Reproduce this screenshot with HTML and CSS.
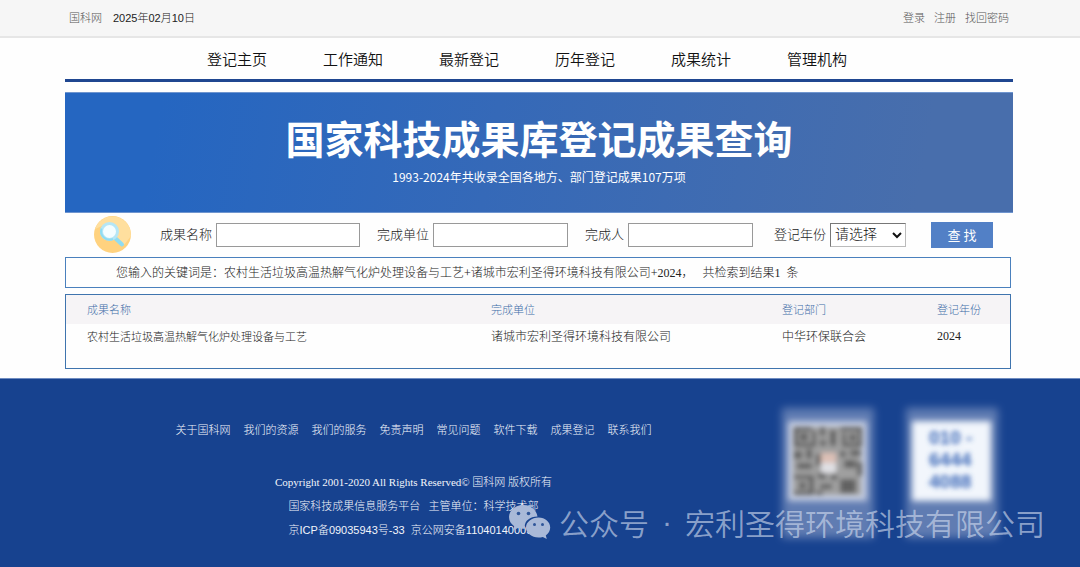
FILE: index.html
```html
<!DOCTYPE html>
<html lang="zh-CN">
<head>
  <meta charset="UTF-8">
  <meta name="viewport" content="width=device-width, initial-scale=1.0">
  <title>国家科技成果库登记成果查询</title>
  <link rel="stylesheet" href="styles.css">
</head>
<body>
  <header class="topbar">
    <div class="topbar-left">
      <a href="#">国科网</a>
      <span class="date">2025年02月10日</span>
    </div>
    <div class="topbar-right">
      <a href="#">登录</a>
      <a href="#">注册</a>
      <a href="#">找回密码</a>
    </div>
  </header>

  <main class="wrap">
    <nav class="nav">
      <a href="#">登记主页</a>
      <a href="#">工作通知</a>
      <a href="#">最新登记</a>
      <a href="#">历年登记</a>
      <a href="#">成果统计</a>
      <a href="#">管理机构</a>
    </nav>

    <div class="banner">
      <h1>国家科技成果库登记成果查询</h1>
      <p>1993-2024年共收录全国各地方、部门登记成果107万项</p>
    </div>

    <form class="search">
      <svg class="search-icon" viewBox="0 0 37 37">
        <circle cx="18.5" cy="18.5" r="18.5" fill="#ffd27f"/>
        <path d="M1 13A18.500 18.500 0 0 1 36 13L37 20L30 29L8 10Z" fill="#ffdf9e"/>
        <path d="M20.500 21.500L28 28.500" stroke="#8fdcf2" stroke-width="4" stroke-linecap="round"/>
        <circle cx="15.500" cy="15.500" r="8" fill="#f4fdff" stroke="#b5e6f6" stroke-width="3"/>
        <path d="M7.500 12.500A8.500 8.500 0 0 0 19 23" fill="none" stroke="#8fdcf2" stroke-width="2"/>
      </svg>
      <div class="field field-name">
        <label for="name">成果名称</label>
        <input type="text" id="name">
      </div>
      <div class="field field-unit">
        <label for="unit">完成单位</label>
        <input type="text" id="unit">
      </div>
      <div class="field field-person">
        <label for="person">完成人</label>
        <input type="text" id="person">
      </div>
      <div class="field field-year">
        <label for="year">登记年份</label>
        <select id="year">
          <option>请选择</option>
        </select>
      </div>
      <button type="button">查 找</button>
    </form>

    <div class="keyword">您输入的关键词是：农村生活垃圾高温热解气化炉处理设备与工艺+诸城市宏利圣得环境科技有限公司+2024，&nbsp; &nbsp;共检索到结果1 &nbsp;条</div>

    <div class="result">
      <table>
        <thead>
          <tr>
            <th class="col-name">成果名称</th>
            <th class="col-unit">完成单位</th>
            <th class="col-dept">登记部门</th>
            <th>登记年份</th>
          </tr>
        </thead>
        <tbody>
          <tr>
            <td class="small">农村生活垃圾高温热解气化炉处理设备与工艺</td>
            <td>诸城市宏利圣得环境科技有限公司</td>
            <td>中华环保联合会</td>
            <td>2024</td>
          </tr>
        </tbody>
      </table>
    </div>
  </main>

  <footer class="footer">
    <div class="footer-info">
      <div class="footer-links">
        <a href="#">关于国科网</a>
        <a href="#">我们的资源</a>
        <a href="#">我们的服务</a>
        <a href="#">免责声明</a>
        <a href="#">常见问题</a>
        <a href="#">软件下载</a>
        <a href="#">成果登记</a>
        <a href="#">联系我们</a>
      </div>
      <p>Copyright 2001-2020 All Rights Reserved© 国科网 版权所有</p>
      <p>国家科技成果信息服务平台 &nbsp; 主管单位：科学技术部</p>
      <p class="icp">京ICP备09035943号-33 &nbsp;京公网安备110401400097</p>
    </div>

    <svg class="codes" viewBox="0 0 240 156">
      <defs>
        <filter id="glow" x="-20%" y="-20%" width="140%" height="140%"><feGaussianBlur stdDeviation="4"/></filter>
        <filter id="edge" x="-20%" y="-20%" width="140%" height="140%"><feGaussianBlur stdDeviation="3"/></filter>
        <filter id="soft" x="-20%" y="-20%" width="140%" height="140%"><feGaussianBlur stdDeviation="2.700"/></filter>
      </defs>
      <g filter="url(#glow)" fill="#b9c3de" opacity="0.450">
        <rect x="12" y="12" width="92" height="130"/>
        <rect x="136" y="12" width="92" height="130"/>
      </g>
      <g filter="url(#edge)">
        <rect x="18" y="25" width="79" height="80" fill="#c3cbdf"/>
        <rect x="142" y="25" width="79" height="80" fill="#f2f6fc"/>
      </g>
      <g filter="url(#soft)">
        <rect x="23" y="31" width="68" height="68" fill="#a0a0a0"/>
        <g fill="#626262">
          <path d="M24 31h18v4h-14v12h14v-12h4v16h-22zM30 37h8v8h-8zM70 31h22v20h-20v-14h4v10h12v-12h-18zM79 38h7v7h-7zM24 79h20v20h-20v-4h15v-12h-15zM29 86h7v7h-7z"/>
          <path d="M50 31h5v9h-5zM60 34h6v16h-6zM50 44h6v6h-6zM24 55h8v8h-8zM36 53h6v10h-6zM27 67h15v6h-15zM46 58h5v12h-5zM70 55h6v6h-6zM80 54h11v6h-11zM74 64h12v8h-12zM87 66h5v14h-5zM48 76h8v7h-8zM50 88h12v5h-12zM61 78h6v6h-6zM70 83h16v14h-16zM46 95h7v4h-7z"/>
        </g>
        <rect x="51" y="57" width="15" height="12" fill="#dcc0b6"/>
        <rect x="51" y="67" width="15" height="10" fill="#e0e0e4"/>
        <g class="phone">
          <text x="159" y="48">010 -</text>
          <text x="159" y="70">6444</text>
          <text x="159" y="92">4088</text>
        </g>
      </g>
    </svg>

    <div class="watermark">
      <svg viewBox="0 0 42 34">
        <path d="M14.500 0C6.500 0 0 5.400 0 12c0 3.700 2 7 5.200 9.200L4 25.500l5-2.600c1.700.6 3.600.9 5.500.9h1.500C14.500 17 20 11.500 28.500 11.500C27.500 5 21.700 0 14.500 0z"/>
        <path d="M29.500 12.500C22.800 12.500 17 17 17 22.500s5.800 10 12.500 10c1.500 0 3-.2 4.300-.6l4 2.100-1-3.600c2.700-1.800 4.400-4.700 4.400-7.900 0-5.500-5-10-11.700-10z"/>
        <g class="eyes">
          <circle cx="9.500" cy="8.500" r="1.800"/>
          <circle cx="19.500" cy="8.500" r="1.800"/>
          <circle cx="25.500" cy="19.500" r="1.500"/>
          <circle cx="33.500" cy="19.500" r="1.500"/>
        </g>
      </svg>
      <span>公众号</span>
      <span class="dot">·</span>
      <span>宏利圣得环境科技有限公司</span>
    </div>
  </footer>
</body>
</html>
```

FILE: styles.css
```css
* {
  box-sizing: border-box;
}

body {
  margin: 0;
  min-height: 100vh;
  display: flex;
  flex-direction: column;
  background: #fefefe;
  color: #222;
  font-family: "Liberation Serif", "Noto Sans CJK SC", serif;
  font-size: 12px;
  font-weight: 300;
}

a {
  color: inherit;
  text-decoration: none;
}

p, h1 {
  margin: 0;
}

.topbar {
  display: flex;
  justify-content: space-between;
  height: 38px;
  padding: 0 71px 3px 69px;
  align-items: center;
  background: #f6f6f6;
  border-bottom: 2px solid #e6e6e6;
  color: #555;
  font-family: "Liberation Sans", "Noto Sans CJK SC", sans-serif;
  font-size: 11px;
}

.topbar-left,
.topbar-right {
  display: flex;
  gap: 11px;
}

.topbar-right {
  gap: 9px;
}

.date {
  color: #222;
}

.wrap {
  margin: 0 67px 0 65px;
}

.nav {
  display: flex;
  justify-content: center;
  gap: 56px;
  height: 44px;
  padding-right: 24px;
  align-items: center;
  border-bottom: 3px solid #1f4690;
  color: #111;
  font-family: "Noto Sans CJK SC", sans-serif;
  font-size: 15px;
  font-weight: 350;
}

.banner {
  margin-top: 10px;
  height: 121px;
  padding-top: 16px;
  background: linear-gradient(100deg, #2566c1 10%, #3569b8 45%, #486eac 90%);
  border: 1px solid #6f95cf;
  border-width: 1px 0;
  color: #fff;
  font-family: "Noto Sans CJK SC", sans-serif;
  font-weight: 400;
  text-align: center;
}

.banner h1 {
  font-size: 39px;
  line-height: 56px;
  font-weight: 700;
}

.banner p {
  line-height: 24px;
}

.search {
  display: flex;
  height: 44px;
  padding-bottom: 1px;
  padding-left: 29px;
  align-items: center;
  font-size: 13px;
}

.search-icon {
  width: 37px;
  height: 37px;
  margin-right: 29px;
}

.field {
  display: flex;
  align-items: center;
  gap: 4px;
  margin-right: 17px;
}

.field label {
  padding-bottom: 2px;
}

.field input {
  height: 24px;
  border: 1px solid #999;
  background: #fff;
  font-size: 13px;
}

.field-name input {
  width: 144px;
}

.field-unit input {
  width: 135px;
}

.field-person input {
  width: 125px;
}

.field-person {
  margin-right: 21px;
}

.field-year {
  margin-right: 25px;
}

.field select {
  width: 76px;
  height: 24px;
  border: 1px solid #bbb;
  border-top-color: #777;
  border-left-color: #777;
  border-radius: 0;
  background: #fff;
  color: #111;
  font-family: inherit;
  font-size: 14px;
  font-weight: 300;
}

.search button {
  width: 62px;
  height: 26px;
  padding: 0;
  border: 0;
  background: #5280c6;
  color: #fff;
  font-family: "Noto Sans CJK SC", sans-serif;
  font-size: 13px;
}

.keyword {
  margin-right: 2px;
  height: 31px;
  padding-left: 50px;
  border: 1px solid #4a80bd;
  line-height: 30px;
}

.result {
  margin: 6px 2px 9px 0;
  height: 75px;
  border: 1px solid #3f74ae;
}

.result table {
  width: 100%;
  border-collapse: collapse;
}

.result th,
.result td {
  padding: 0 0 2px 21px;
  text-align: left;
}

.result th {
  height: 29px;
  background: #f6f4f6;
  color: #3d6ca8;
  font-size: 11px;
  font-weight: 300;
}

.result td {
  height: 26px;
}

.result .small {
  font-size: 11px;
}

.col-name {
  width: 404px;
}

.col-unit {
  width: 291px;
}

.col-dept {
  width: 155px;
}

.footer {
  position: relative;
  flex: 1;
  display: flex;
  padding: 0 70px 14px 65px;
  background: #17428f;
  border-top: 1px solid #6f8cc0;
  color: #f2f5fb;
}

.footer-info {
  flex: 1;
  padding-top: 39px;
  padding-right: 8px;
  font-size: 11px;
  line-height: 24px;
  text-align: center;
}

.footer-links {
  display: flex;
  justify-content: center;
  gap: 13px;
  margin-bottom: 28px;
}

.footer-info .icp {
  font-family: "Liberation Sans", "Noto Sans CJK SC", sans-serif;
}

.codes {
  width: 240px;
  height: 156px;
  margin-top: 17px;
}

.phone {
  fill: #3c69b8;
  font-family: "Liberation Sans", sans-serif;
  font-size: 19px;
  font-weight: 700;
}

.watermark {
  position: absolute;
  right: 35px;
  bottom: 23px;
  display: flex;
  align-items: center;
  gap: 13px;
  color: rgba(205, 216, 236, 0.65);
  font-family: "Noto Sans CJK SC", sans-serif;
  font-size: 30px;
  font-weight: 350;
  line-height: 44px;
  white-space: nowrap;
}

.watermark svg {
  width: 42px;
  height: 34px;
  margin-right: -5px;
  fill: #a9b9d8;
}

.watermark .dot {
  font-family: "Liberation Sans", sans-serif;
}

.watermark .eyes {
  fill: #2f5599;
}
```
